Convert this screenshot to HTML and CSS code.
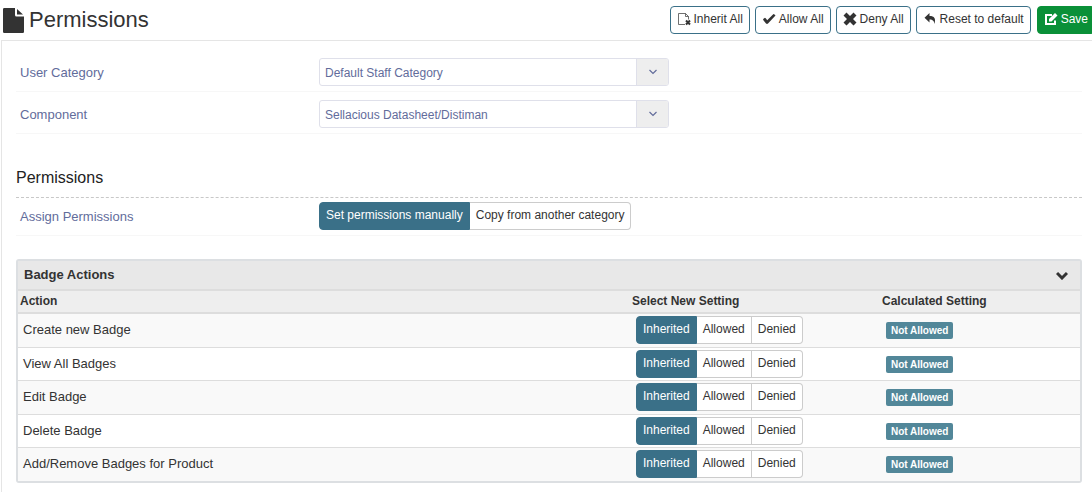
FILE: index.html
```html
<!DOCTYPE html>
<html lang="en">
<head>
<meta charset="utf-8">
<title>Permissions</title>
<link rel="stylesheet" href="styles.css">
</head>
<body>
<header class="topbar">
  <h1 class="page-title">
    <svg class="title-icon" viewBox="0 0 21 25" aria-hidden="true"><path d="M1.200 0H12V7Q12 8.500 13.500 8.500H21V23.800Q21 25 19.800 25H1.200Q0 25 0 23.800V1.200Q0 0 1.200 0ZM14 1L20 6.500H14Z"/></svg>
    Permissions
  </h1>
  <div class="toolbar">
    <button class="btn" type="button"><svg class="icon" viewBox="0 0 14 14" aria-hidden="true"><path class="line thin" d="M8 12.500H1.500V1.500H8.500L11.500 4.500V7.500M8.500 1.500V4.500H11.500"/><path class="line thick" d="M9 8.500L13 12.500M13 8.500L9 12.500"/></svg>Inherit All</button>
    <button class="btn" type="button"><svg class="icon" viewBox="0 0 14 14" aria-hidden="true"><path d="M1 7.800Q1 7 3 5.800Q3.800 6 5.200 8.200L11.500 2Q12.500 2 13.500 3.500L6 11.500Q5 12.300 4 11.500Z"/></svg>Allow All</button>
    <button class="btn" type="button"><svg class="icon" viewBox="0 0 14 14" aria-hidden="true"><path d="M3.500 0.500L7 4L10.500 0.500L13.500 3.500L10 7L13.500 10.500L10.500 13.500L7 10L3.500 13.500L0.500 10.500L4 7L0.500 3.500Z"/></svg>Deny All</button>
    <button class="btn" type="button"><svg class="icon" viewBox="0 0 14 14" aria-hidden="true"><path d="M6.500 1V4C11.500 4 13 6.500 11.500 12C11 9 10 7.500 6.500 7.500V10.500L1.500 5.700Z"/></svg>Reset to default</button>
    <button class="btn save" type="button"><svg class="icon" viewBox="0 0 14 14" aria-hidden="true"><path class="line thick" d="M8 3H2V12H11V8.500"/><path d="M5 7L11 1L13.500 3.500L7.500 9.500H5Z"/></svg>Save</button>
  </div>
</header>
<main class="content">
  <form>
    <div class="field">
      <label class="field-label" for="category">User Category</label>
      <div class="select">
        <select id="category"><option>Default Staff Category</option></select>
        <span class="select-arrow"><svg viewBox="0 0 8 6" aria-hidden="true"><path d="M0.500 1L4 4.500L7.500 1"/></svg></span>
      </div>
    </div>
    <div class="field">
      <label class="field-label" for="component">Component</label>
      <div class="select">
        <select id="component"><option>Sellacious Datasheet/Distiman</option></select>
        <span class="select-arrow"><svg viewBox="0 0 8 6" aria-hidden="true"><path d="M0.500 1L4 4.500L7.500 1"/></svg></span>
      </div>
    </div>
    <h2 class="section-title">Permissions</h2>
    <div class="field assign">
      <span class="field-label" id="assign-label">Assign Permissions</span>
      <div class="group" role="radiogroup" aria-labelledby="assign-label">
        <label><input type="radio" name="assign" checked><span>Set permissions manually</span></label><label><input type="radio" name="assign"><span>Copy from another category</span></label>
      </div>
    </div>
    <section class="panel">
      <h3 class="panel-head"><button type="button">Badge Actions<svg viewBox="0 0 12 9" aria-hidden="true"><path d="M1 2L6 7L11 2"/></svg></button></h3>
      <table>
        <thead><tr><th>Action</th><th class="col-setting">Select New Setting</th><th class="col-result">Calculated Setting</th></tr></thead>
        <tbody>
          <tr><td>Create new Badge</td><td><div class="group" role="radiogroup" aria-label="Create new Badge"><label><input type="radio" name="create" checked><span>Inherited</span></label><label><input type="radio" name="create"><span>Allowed</span></label><label><input type="radio" name="create"><span>Denied</span></label></div></td><td><span class="badge">Not Allowed</span></td></tr>
          <tr><td>View All Badges</td><td><div class="group" role="radiogroup" aria-label="View All Badges"><label><input type="radio" name="view" checked><span>Inherited</span></label><label><input type="radio" name="view"><span>Allowed</span></label><label><input type="radio" name="view"><span>Denied</span></label></div></td><td><span class="badge">Not Allowed</span></td></tr>
          <tr><td>Edit Badge</td><td><div class="group" role="radiogroup" aria-label="Edit Badge"><label><input type="radio" name="edit" checked><span>Inherited</span></label><label><input type="radio" name="edit"><span>Allowed</span></label><label><input type="radio" name="edit"><span>Denied</span></label></div></td><td><span class="badge">Not Allowed</span></td></tr>
          <tr><td>Delete Badge</td><td><div class="group" role="radiogroup" aria-label="Delete Badge"><label><input type="radio" name="delete" checked><span>Inherited</span></label><label><input type="radio" name="delete"><span>Allowed</span></label><label><input type="radio" name="delete"><span>Denied</span></label></div></td><td><span class="badge">Not Allowed</span></td></tr>
          <tr><td>Add/Remove Badges for Product</td><td><div class="group" role="radiogroup" aria-label="Add/Remove Badges for Product"><label><input type="radio" name="product" checked><span>Inherited</span></label><label><input type="radio" name="product"><span>Allowed</span></label><label><input type="radio" name="product"><span>Denied</span></label></div></td><td><span class="badge">Not Allowed</span></td></tr>
        </tbody>
      </table>
    </section>
  </form>
</main>
</body>
</html>
```
FILE: styles.css
```css
* { box-sizing: border-box; }
body {
  margin: 0;
  background: #fff;
  color: #333;
  font: 13px/18px "Liberation Sans", Arial, sans-serif;
}
button, select { font: inherit; color: inherit; }

.topbar {
  display: flex;
  justify-content: space-between;
  height: 40px;
  padding-left: 3px;
  overflow: hidden;
}
.page-title {
  display: flex;
  align-items: center;
  gap: 5px;
  margin: 0;
  font-size: 22px;
  font-weight: 400;
}
.title-icon { width: 21px; height: 25px; fill: #333; }
.toolbar {
  display: flex;
  gap: 5px;
  padding-top: 6px;
  margin-right: -3px;
}
.btn {
  display: flex;
  align-items: center;
  gap: 3px;
  height: 28px;
  padding: 0 6px 2px;
  border: 1px solid #3a7088;
  border-radius: 4px;
  background: #fff;
  font-size: 12px;
  white-space: nowrap;
}
.icon { width: 14px; height: 14px; fill: currentColor; }
.line { fill: none; stroke: currentColor; }
.thin { stroke-width: 1; opacity: 0.7; }
.thick { stroke-width: 2; }
.save { margin-left: 1px; border-color: #0a9038; background: #0a9038; color: #fff; }

.content {
  margin-left: 1px;
  padding: 9px 10px 9px 14px;
  border-top: 1px solid #e5e5e5;
  border-left: 1px solid #e5e5e5;
}
.field {
  display: grid;
  grid-template-columns: 299px 1fr;
  align-items: center;
  padding: 8px 0 5px 4px;
  border-bottom: 1px solid #f7f7f7;
  color: #626c9b;
}
.field-label { padding-top: 2px; }
.assign { padding-top: 4px; }
.select {
  display: grid;
  grid-template-columns: 1fr 32px;
  width: 350px;
  height: 28px;
  border: 1px solid #dfe0ea;
  border-radius: 3px;
  overflow: hidden;
}
.select select {
  grid-area: 1 / 1 / 2 / 3;
  appearance: none;
  border: 0;
  padding: 2px 36px 0 5px;
  background: transparent;
  font-size: 12px;
}
.select-arrow {
  grid-area: 1 / 2;
  display: grid;
  place-items: center;
  border-left: 1px solid #dfe0ea;
  background: #eee;
  pointer-events: none;
}
.select-arrow svg { width: 8px; height: 6px; fill: none; stroke: #626c9b; stroke-width: 1.2; }

.section-title {
  margin: 33px 0 0;
  padding-bottom: 8px;
  border-bottom: 1px dashed #c8c8c8;
  color: #222;
  font-size: 16px;
  font-weight: 400;
  line-height: 22px;
}

.group { display: flex; color: #333; font-size: 12px; }
.group label { position: relative; }
.group input { position: absolute; opacity: 0; margin: 0; }
.group span {
  display: block;
  height: 28px;
  padding: 3px 6px;
  border: 1px solid #ccc;
  border-left-width: 0;
  background: #fff;
}
.group label:first-child span { border-left-width: 1px; border-radius: 4px 0 0 4px; }
.group label:last-child span { border-radius: 0 4px 4px 0; }
.group input:checked + span { border-color: #3a7088; background: #3a7088; color: #fff; }

.panel {
  margin-top: 23px;
  border: 2px solid #dcdfe2;
  border-radius: 3px;
}
.panel-head { margin: 0; border-bottom: 2px solid #ddd; }
.panel-head button {
  display: flex;
  align-items: center;
  justify-content: space-between;
  width: 100%;
  height: 28px;
  padding: 0 12px 0 6px;
  border: 0;
  background: #e8e8e8;
  font-size: 13px;
  font-weight: 700;
}
.panel-head svg { width: 12px; height: 9px; fill: none; stroke: #333; stroke-width: 3; }
table { width: 100%; border-collapse: separate; border-spacing: 0; table-layout: fixed; }
.col-setting { width: 250px; }
.col-result { width: 200px; }
th {
  height: 23px;
  padding: 0 2px 2px;
  border-bottom: 2px solid #ddd;
  background: #eee;
  font-size: 12px;
  text-align: left;
}
td { height: 34px; padding: 0 6px 1px; border-bottom: 1px solid #ddd; }
td:first-child { padding-left: 5px; }
td:last-child { padding-bottom: 0; }
tbody tr:nth-child(even) td { height: 33px; }
tbody tr:nth-child(odd) td { background: #f9f9f9; }
tbody tr:last-child td { height: 33px; border-bottom: 0; }
.badge {
  display: block;
  width: max-content;
  padding: 0 5px;
  border-radius: 2px;
  background: #528799;
  color: #fff;
  font-size: 10px;
  font-weight: 700;
  line-height: 17px;
}
```
